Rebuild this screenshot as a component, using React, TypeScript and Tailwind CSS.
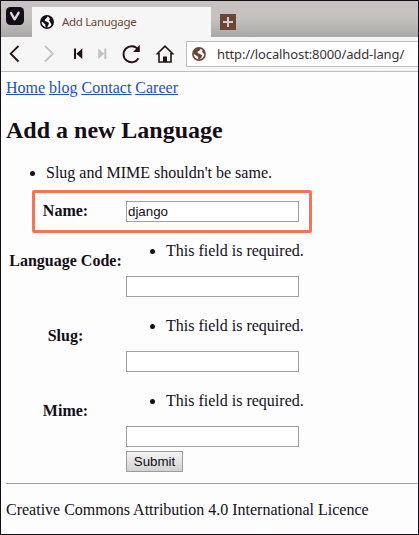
import React from "react";

function TabGlobe() {
  return (
    <svg viewBox="0 0 14 14" className="h-[14px] w-[14px]">
      <circle cx="7" cy="7" r="6.2" fill="white" stroke="#140d18" strokeWidth="1.5" />
      <path
        d="M1 5 L3 1.8 L6.4 .8 L7.6 2 L6.4 3.2 L5 4.6 L4.8 6 L7 6.8 L9 8 L8.4 10 L7 12.8 L5.6 12.6 L5.2 9.6 L3.2 7.6 L1 6.6 Z M8.6 1.4 L11.4 2.4 L13.2 5.4 L13 9 L11.6 10 L10.4 7.4 L9 5.2 L10 4 Z"
        fill="#140d18"
      />
    </svg>
  );
}

function AddressGlobe() {
  return (
    <svg viewBox="0 0 14 14" className="h-[14px] w-[14px]">
      <circle cx="7" cy="7" r="6.1" fill="white" stroke="#6b4637" strokeWidth="1.6" />
      <path
        d="M1.2 4.6 L3.2 1.8 L6.6 1 L8.4 2.2 L7.4 3.8 L5.8 4.4 L5.6 6 L8 7 L10.2 8.4 L9.4 10.4 L7.6 12.6 L6.4 12.4 L6 9.8 L3.4 8 L1.2 6.6 Z M10.2 3 L12.4 4.4 L13 7 L11.4 6.6 L10.2 5 Z"
        fill="#6b4637"
      />
    </svg>
  );
}

function TabStrip() {
  return (
    <div className="flex h-9 bg-linear-to-b from-[#c8c3c3] via-[#c3c1be] to-[#a9a8a6]">
      <div className="w-[31px] pt-1.5 pl-[5px]">
        <svg viewBox="0 0 18 18" className="h-[18px] w-[18px]">
          <rect width="18" height="18" rx="4.5" fill="#140d18" />
          <path d="M5 6 L8.6 12.3 L12.6 5.8" fill="none" stroke="#dedada" strokeWidth="2.4" strokeLinecap="round" strokeLinejoin="round" />
        </svg>
      </div>
      <div className="mt-1.5 flex h-[30px] w-[179px] items-center bg-[#f6f6f6] pl-2 text-[#6b4637]">
        <TabGlobe />
        <span className="ml-2 font-['Noto_Sans',sans-serif] text-[11.5px] leading-4 tracking-[-0.33px] whitespace-nowrap">Add Lanugage</span>
      </div>
      <div className="pt-[13px] pl-[9px]">
        <svg viewBox="0 0 16 16" className="h-4 w-4">
          <rect width="16" height="16" fill="#6b4637" />
          <path d="M8 3V13M3 8H13" stroke="#d2cdca" strokeWidth="2" />
        </svg>
      </div>
    </div>
  );
}

function Toolbar() {
  return (
    <div className="flex h-[35px] border-b border-[#bdbdbd] bg-[#f6f6f6]">
      <svg viewBox="1 37 185 34" className="h-[34px] w-[185px] shrink-0" fill="none">
        <path d="M18.5 46 L10.7 53.7 L18.5 61.5" stroke="#241114" strokeWidth="1.8" />
        <path d="M45 46 L52.8 53.7 L45 61.5" stroke="#c4c2bf" strokeWidth="1.8" />
        <path d="M74 48.5H76V59H74Z M82.3 48.5V59L76.3 53.8Z" fill="#241114" />
        <path d="M98.2 48.5V59L104.2 53.8Z M104.3 48.5H106.3V59H104.3Z" fill="#c4c2bf" />
        <path d="M138 49.5 A8 8 0 1 0 138.5 58.2" stroke="#241114" strokeWidth="1.9" />
        <path d="M139.8 45V52H133Z" fill="#241114" />
        <path d="M156.5 54.5 L165 46.2 L173.5 54.5 M159 53V62H171V53" stroke="#241114" strokeWidth="1.6" />
        <path d="M163 62V56.5H167V62Z" fill="#241114" />
      </svg>
      <div className="mt-1 flex h-[26px] flex-1 items-center border border-r-0 border-[#bdbdbd] bg-white pl-[5px]">
        <AddressGlobe />
        <span className="ml-[11px] font-['Noto_Sans',sans-serif] text-[13px] leading-4 tracking-[-0.11px] whitespace-nowrap text-[#3b3135]">http://localhost:8000/add-lang/</span>
      </div>
    </div>
  );
}

function Bullet() {
  return <span className="mt-[7px] h-[5px] w-[5px] shrink-0 rounded-full bg-[#140d18]" />;
}

const inputStyle =
  "block h-[21px] w-[173px] border border-[#a0a0a0] bg-white px-px font-['Liberation_Sans',sans-serif] text-[13.33px] leading-4 text-[#140d18] outline-none";

function ErrorRow({ label }: { label: string }) {
  return (
    <div className="flex h-[75px]">
      <div className="w-[119px] pt-2.5 text-center font-bold whitespace-nowrap">{label}</div>
      <div className="ml-px">
        <div className="flex h-[34px] pl-6">
          <Bullet />
          <span className="ml-[11px] whitespace-nowrap">This field is required.</span>
        </div>
        <input aria-label={label} className={inputStyle} />
      </div>
    </div>
  );
}

export default function App() {
  return (
    <div className="flex h-[535px] w-[419px] flex-col overflow-hidden border border-[#140d18] bg-[#fdfdfd] font-['Liberation_Serif',serif] text-base leading-[18px] text-[#140d18]">
      <TabStrip />
      <Toolbar />
      <main className="flex flex-col pl-[5px]">
        <nav className="mt-[7px] flex gap-1 text-[#2350c0] underline">
          <a href="#home">Home</a>
          <a href="#blog">blog</a>
          <a href="#contact">Contact</a>
          <a href="#career">Career</a>
        </nav>
        <h2 className="mt-[19px] text-2xl leading-7 font-bold">Add a new Language</h2>
        <div className="mt-5 flex pl-6">
          <Bullet />
          <span className="ml-[11px]">Slug and MIME shouldn't be same.</span>
        </div>
        <div className="mt-2 ml-[26px] flex h-[43px] w-[280px] items-center rounded-[2px] border-3 border-[#f47458]">
          <div className="w-[61px] pb-0.5 text-center font-bold">Name:</div>
          <input aria-label="Name" defaultValue="django" className={inputStyle + " ml-[30px]"} />
        </div>
        <div className="mt-[9px]">
          <ErrorRow label="Language Code:" />
          <ErrorRow label="Slug:" />
          <ErrorRow label="Mime:" />
        </div>
        <button className="-mt-4 ml-[120px] h-[21px] w-[57px] border border-[#9b9b9b] bg-linear-to-b from-[#f4f4f4] to-[#d2d2d2] font-['Liberation_Sans',sans-serif] text-[13.33px] leading-4">
          Submit
        </button>
        <hr className="mt-[11px] border-t border-[#a0a0a0]" />
        <footer className="mt-[17px]">Creative Commons Attribution 4.0 International Licence</footer>
      </main>
    </div>
  );
}
